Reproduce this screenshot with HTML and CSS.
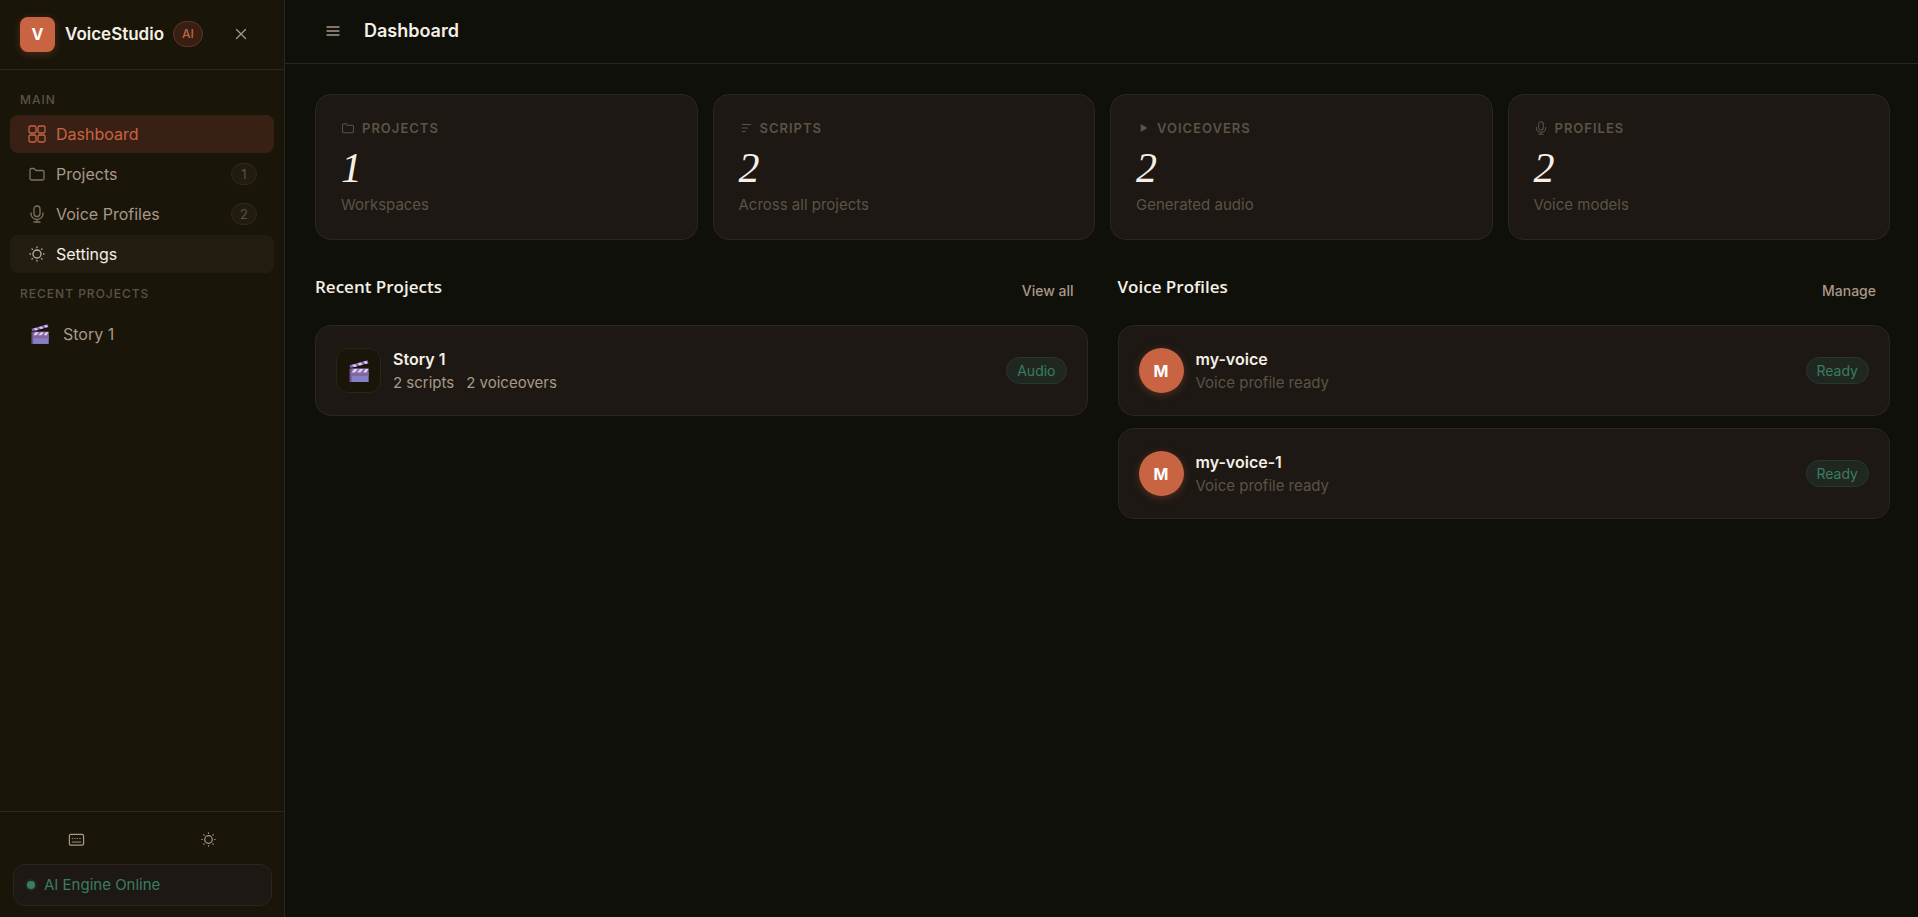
FILE: index.html
```html
<!DOCTYPE html>
<html lang="en">
<head>
  <meta charset="UTF-8" />
  <meta name="viewport" content="width=device-width, initial-scale=1.0" />
  <title>VoiceStudio - Dashboard</title>
  <link rel="stylesheet" href="styles.css">
</head>
<body>
  <!-- Shared icons -->
  <svg class="sprite" aria-hidden="true">
    <symbol id="i-grid" viewBox="0 0 18 18"><rect x="1" y="1" width="7" height="7" rx="1.5"/><rect x="10" y="1" width="7" height="7" rx="1.5"/><rect x="1" y="10" width="7" height="7" rx="1.5"/><rect x="10" y="10" width="7" height="7" rx="1.5"/></symbol>
    <symbol id="i-folder" viewBox="0 0 18 18"><path d="M2 13.5V5A1.5 1.5 0 0 1 3.5 3.500H6l2 2H14.500A1.500 1.500 0 0 1 16 7v6.500A1.500 1.500 0 0 1 14.500 15h-11A1.500 1.500 0 0 1 2 13.500z"/></symbol>
    <symbol id="i-mic" viewBox="0 0 18 18"><rect x="6" y="1" width="6" height="10.500" rx="3"/><path d="M3 8v1a6 5.500 0 0 0 12 0V8M9 14.500V17M6 17h6"/></symbol>
    <symbol id="i-sun" viewBox="0 0 18 18"><circle cx="9" cy="9" r="4"/><path d="M9 2v.5M9 15.500v.5M2 9h.5M15.500 9h.5M4 4l.4.4M13.600 13.600l.4.4M4 14l.4-.4M13.600 4.400l.4-.4"/></symbol>
    <symbol id="i-clapper" viewBox="0 0 20 22">
      <path fill="#6f5088" d="M.5 8.500h19V22H.5z"/>
      <path fill="#8580c6" d="M2.500 12h17v10h-17z"/>
      <path fill="#86669f" d="M2.500 8.500h17V16h-17z"/>
      <path fill="#d9d2f7" d="M5 9h4l-3 3.500H2.500zM11 9h3.500l-3 3.500H8zM16.500 9h3l-2 3.500h-3.500z"/>
      <path fill="#8b5fb0" d="M.5 5.200L18.500.3l1 2.900L1.500 8z"/>
      <path fill="#d9d2f7" d="M3 5l3-.8 2.200 2-3.200.9zM8.600 3.400l3-.8 2.200 2.100-3.200.8zM14.300 1.800l3-.8 1.500 2.300-2.300.6z"/>
    </symbol>
  </svg>

  <aside class="sidebar">
    <div class="brand">
      <div class="brand-logo">V</div>
      <span class="brand-name">VoiceStudio</span>
      <span class="brand-tag">AI</span>
      <button class="icon-btn brand-close" type="button" aria-label="Close sidebar">
        <svg class="icon" viewBox="0 0 18 18"><path d="M4.500 4.500l9 9M13.500 4.500l-9 9"/></svg>
      </button>
    </div>

    <nav class="nav">
      <div class="nav-label">Main</div>
      <a class="nav-item active" href="#"><svg class="icon"><use href="#i-grid"/></svg>Dashboard</a>
      <a class="nav-item" href="#"><svg class="icon"><use href="#i-folder"/></svg>Projects<span class="nav-count">1</span></a>
      <a class="nav-item" href="#"><svg class="icon"><use href="#i-mic"/></svg>Voice Profiles<span class="nav-count">2</span></a>
      <a class="nav-item hover" href="#"><svg class="icon"><use href="#i-sun"/></svg>Settings</a>
      <div class="nav-label">Recent Projects</div>
      <a class="nav-item nav-project" href="#"><svg class="emoji"><use href="#i-clapper"/></svg>Story 1</a>
    </nav>

    <div class="sidebar-footer">
      <div class="footer-actions">
        <button class="icon-btn" type="button" aria-label="Keyboard shortcuts">
          <svg class="icon" viewBox="0 0 18 18"><rect x="1.500" y="3.500" width="15" height="11.500" rx="1.500"/><path class="thin" d="M4.500 8h.5M7.200 8h.5M9.800 8h.5M12.500 8h.5M4.500 11.700h9"/></svg>
        </button>
        <button class="icon-btn" type="button" aria-label="Toggle theme">
          <svg class="icon"><use href="#i-sun"/></svg>
        </button>
      </div>
      <div class="status"><span class="status-dot"></span>AI Engine Online</div>
    </div>
  </aside>

  <main class="main">
    <header class="topbar">
      <button class="icon-btn" type="button" aria-label="Toggle menu">
        <svg class="icon" viewBox="0 0 18 18"><path d="M3 5h12M3 9h12M3 13h12"/></svg>
      </button>
      <h1>Dashboard</h1>
    </header>

    <div class="content">
      <section class="stats">
        <div class="stat">
          <div class="stat-label"><svg class="icon"><use href="#i-folder"/></svg>Projects</div>
          <div class="stat-value">1</div>
          <div class="stat-sub">Workspaces</div>
        </div>
        <div class="stat">
          <div class="stat-label"><svg class="icon" viewBox="0 0 18 18"><path d="M4 4.500h11M4 9h7M4 13.500h4"/></svg>Scripts</div>
          <div class="stat-value">2</div>
          <div class="stat-sub">Across all projects</div>
        </div>
        <div class="stat">
          <div class="stat-label"><svg class="icon" viewBox="0 0 18 18"><path class="solid" d="M6 4l9 5-9 5z"/></svg>Voiceovers</div>
          <div class="stat-value">2</div>
          <div class="stat-sub">Generated audio</div>
        </div>
        <div class="stat">
          <div class="stat-label"><svg class="icon"><use href="#i-mic"/></svg>Profiles</div>
          <div class="stat-value">2</div>
          <div class="stat-sub">Voice models</div>
        </div>
      </section>

      <div class="columns">
        <section>
          <div class="section-head">
            <h2>Recent Projects</h2>
            <button class="link-btn" type="button">View all</button>
          </div>
          <div class="list">
            <div class="row-card">
              <div class="thumb"><svg class="emoji"><use href="#i-clapper"/></svg></div>
              <div class="row-text">
                <div class="row-title">Story 1</div>
                <div class="row-meta"><span>2 scripts</span><span>2 voiceovers</span></div>
              </div>
              <span class="badge">Audio</span>
            </div>
          </div>
        </section>

        <section>
          <div class="section-head">
            <h2>Voice Profiles</h2>
            <button class="link-btn" type="button">Manage</button>
          </div>
          <div class="list">
            <div class="row-card">
              <div class="avatar">M</div>
              <div class="row-text">
                <div class="row-title">my-voice</div>
                <div class="row-meta muted">Voice profile ready</div>
              </div>
              <span class="badge">Ready</span>
            </div>
            <div class="row-card">
              <div class="avatar">M</div>
              <div class="row-text">
                <div class="row-title">my-voice-1</div>
                <div class="row-meta muted">Voice profile ready</div>
              </div>
              <span class="badge">Ready</span>
            </div>
          </div>
        </section>
      </div>
    </div>
  </main>
</body>
</html>
```
FILE: styles.css
```css
:root {
  --bg: #10100a;
  --sidebar: #191509;
  --card: #1d1813;
  --border: #2b2620;
  --text: #f5efe6;
  --text-2: #a89888;
  --text-3: #5c5246;
  --accent: #c96442;
  --green: #3a7d62;
}

* {
  margin: 0;
  padding: 0;
  box-sizing: border-box;
}

body {
  display: flex;
  min-height: 100vh;
  background: var(--bg);
  color: var(--text);
  font-family: Inter, "Liberation Sans", sans-serif;
  font-size: 16px;
  line-height: 24px;
}

button {
  border: 0;
  background: none;
  color: inherit;
  font: inherit;
  cursor: pointer;
}

a {
  color: inherit;
  text-decoration: none;
}

.sprite {
  position: absolute;
  width: 0;
  height: 0;
}

.icon {
  width: 18px;
  height: 18px;
  flex: none;
  fill: none;
  stroke: currentColor;
  stroke-width: 1.3;
  stroke-linecap: round;
  stroke-linejoin: round;
}

.icon .solid {
  fill: currentColor;
  stroke: none;
}

.icon .thin {
  stroke-width: 1;
}

.icon-btn {
  display: flex;
  align-items: center;
  justify-content: center;
  width: 36px;
  height: 34px;
  color: var(--text-2);
}

/* ---------- SIDEBAR ---------- */
.sidebar {
  display: flex;
  flex-direction: column;
  flex: none;
  width: 285px;
  background: var(--sidebar);
  border-right: 1px solid var(--border);
}

.brand {
  display: flex;
  align-items: center;
  height: 70px;
  padding: 0 25px 1px 20px;
  border-bottom: 1px solid var(--border);
}

.brand-logo {
  display: grid;
  place-items: center;
  width: 35px;
  height: 35px;
  margin-right: 10px;
  border-radius: 8px;
  background: var(--accent);
  color: #fff;
  font-weight: 700;
  box-shadow: 0 2px 8px rgba(201, 100, 66, 0.3);
}

.brand-name {
  font-size: 17px;
  font-weight: 600;
}

.brand-tag {
  margin-left: 9px;
  padding: 0 8px;
  border: 1px solid #633322;
  border-radius: 13px;
  background: #371f14;
  color: var(--accent);
  font-size: 12px;
  font-weight: 500;
}

.brand-close {
  margin-left: auto;
}

.nav {
  display: flex;
  flex-direction: column;
  flex: 1;
  gap: 2px;
  padding: 16px 10px;
}

.nav-label {
  padding: 0 10px;
  color: var(--text-3);
  font-size: 12px;
  font-weight: 500;
  letter-spacing: 1px;
  text-transform: uppercase;
  line-height: 27px;
}

.nav-item + .nav-label {
  line-height: 38px;
}

.nav-item {
  display: flex;
  align-items: center;
  gap: 10px;
  height: 38px;
  padding: 0 17px 0 18px;
  border-radius: 8px;
  color: var(--text-2);
}

.nav-item .icon {
  opacity: 0.7;
}

.nav-item.active {
  background: #382014;
  color: var(--accent);
}

.nav-item.active .icon {
  opacity: 1;
}

.nav-item.hover,
.nav-item:not(.active):hover {
  background: #231c11;
  color: var(--text);
}

.nav-count {
  margin-left: auto;
  padding: 0 8px;
  min-width: 26px;
  border: 1px solid #302a1d;
  border-radius: 11px;
  background: #211b10;
  color: var(--text-3);
  font-size: 13px;
  line-height: 20px;
  text-align: center;
}

.emoji {
  width: 18px;
  height: 20px;
}

.nav-project {
  gap: 14px;
  padding-left: 21px;
}

.sidebar-footer {
  padding: 10px 12px 11px 13px;
  border-top: 1px solid var(--border);
}

.footer-actions {
  display: grid;
  grid-template-columns: 1fr 1fr;
  gap: 6px;
  justify-items: center;
  margin-bottom: 8px;
}

.footer-actions .icon {
  width: 17px;
  height: 17px;
}

.status {
  display: flex;
  align-items: center;
  gap: 9px;
  height: 42px;
  padding: 0 13px;
  border: 1px solid var(--border);
  border-radius: 12px;
  background: var(--card);
  color: var(--green);
  font-size: 15px;
}

.status-dot {
  width: 8px;
  height: 8px;
  border-radius: 50%;
  background: var(--green);
  box-shadow: 0 0 0 2px #222a20;
}

/* ---------- MAIN ---------- */
.main {
  flex: 1;
  min-width: 0;
}

.topbar {
  display: flex;
  align-items: center;
  gap: 13px;
  height: 64px;
  padding: 0 30px 2px;
  border-bottom: 1px solid var(--border);
}

.topbar h1 {
  font-size: 18px;
  font-weight: 600;
}

.content {
  padding: 30px 28px 30px 30px;
}

.stats {
  display: grid;
  grid-template-columns: repeat(4, 1fr);
  gap: 15px;
  margin-bottom: 31px;
}

.stat,
.row-card {
  border: 1px solid var(--border);
  border-radius: 16px;
  background: var(--card);
}

.stat {
  padding: 21px 25px 22px;
}

.stat-label {
  display: flex;
  align-items: center;
  gap: 7px;
  color: var(--text-3);
  font-size: 13px;
  font-weight: 600;
  letter-spacing: 1px;
  text-transform: uppercase;
}

.stat-label .icon {
  width: 14px;
  height: 14px;
}

.stat-value {
  margin: 6px 0 2px;
  font-family: "Liberation Serif", serif;
  font-size: 42px;
  font-style: italic;
  line-height: 45px;
}

.stat-sub {
  color: var(--text-3);
  font-size: 15px;
}

.columns {
  display: grid;
  grid-template-columns: 1fr 1fr;
  gap: 30px;
}

.section-head {
  display: flex;
  justify-content: space-between;
  align-items: flex-start;
  height: 54px;
}

.section-head h2 {
  font-family: "Open Sans", "Noto Sans", sans-serif;
  font-size: 17px;
  font-weight: 600;
  line-height: 32px;
}

.link-btn {
  padding: 8px 14px;
  color: var(--text-2);
  font-size: 14px;
  font-weight: 500;
}

.list {
  display: flex;
  flex-direction: column;
  gap: 12px;
}

.row-card {
  display: flex;
  align-items: center;
  gap: 12px;
  height: 91px;
  padding: 0 20px;
}

.thumb,
.avatar {
  display: grid;
  place-items: center;
  flex: none;
  width: 45px;
  height: 45px;
}

.thumb {
  border: 1px solid #2a2519;
  border-radius: 12px;
  background: var(--sidebar);
}

.thumb .emoji {
  width: 20px;
  height: 22px;
}

.avatar {
  border-radius: 50%;
  background: var(--accent);
  color: #fff;
  font-weight: 700;
  box-shadow: 0 2px 8px rgba(201, 100, 66, 0.3);
}

.row-text {
  flex: 1;
}

.row-title {
  font-weight: 600;
}

.row-meta {
  display: flex;
  gap: 12px;
  color: var(--text-2);
  font-size: 15px;
}

.row-meta.muted {
  color: var(--text-3);
}

.badge {
  padding: 0 10px;
  border: 1px solid #243a2e;
  border-radius: 14px;
  background: #202720;
  color: var(--green);
  font-size: 14px;
  line-height: 25px;
}
```
